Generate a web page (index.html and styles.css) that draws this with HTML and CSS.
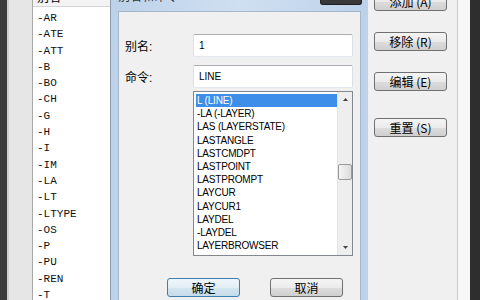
FILE: index.html
```html
<!DOCTYPE html>
<html lang="zh-CN">
<head>
    <meta charset="UTF-8">
    <meta name="viewport" content="width=device-width, initial-scale=1.0">
    <title>别名编辑器</title>
    <link rel="stylesheet" href="styles.css">
</head>
<body>
    <div class="desk">
        <div class="edge-dark"></div>
        <div class="edge-gray"></div>

        <div class="alias-pane">
            <div class="alias-head">别名</div>
            <ul class="alias-list">
                <li>-AR</li>
                <li>-ATE</li>
                <li>-ATT</li>
                <li>-B</li>
                <li>-BO</li>
                <li>-CH</li>
                <li>-G</li>
                <li>-H</li>
                <li>-I</li>
                <li>-IM</li>
                <li>-LA</li>
                <li>-LT</li>
                <li>-LTYPE</li>
                <li>-OS</li>
                <li>-P</li>
                <li>-PU</li>
                <li>-REN</li>
                <li>-T</li>
            </ul>
        </div>

        <div class="dialog">
            <div class="dlg-title">
                <span>别名和命令</span>
                <span class="dlg-close"></span>
            </div>
            <div class="dlg-body">
                <div class="field">
                    <label>别名:</label>
                    <div class="textbox">1</div>
                </div>
                <div class="field">
                    <label>命令:</label>
                    <div class="textbox">LINE</div>
                </div>
                <div class="cmd-box">
                    <ul class="cmd-list">
                        <li class="selected">L (LINE)</li>
                        <li>-LA (-LAYER)</li>
                        <li>LAS (LAYERSTATE)</li>
                        <li>LASTANGLE</li>
                        <li>LASTCMDPT</li>
                        <li>LASTPOINT</li>
                        <li>LASTPROMPT</li>
                        <li>LAYCUR</li>
                        <li>LAYCUR1</li>
                        <li>LAYDEL</li>
                        <li>-LAYDEL</li>
                        <li>LAYERBROWSER</li>
                    </ul>
                    <div class="scrollbar">
                        <svg class="arrow" width="15" height="15" viewBox="0 0 15 15"><path d="M5 9 L7.5 6 L10 9 Z" fill="#444"/></svg>
                        <div class="track">
                            <div class="thumb"></div>
                        </div>
                        <svg class="arrow" width="15" height="15" viewBox="0 0 15 15"><path d="M5 6 L7.5 9 L10 6 Z" fill="#444"/></svg>
                    </div>
                </div>
                <div class="dlg-actions">
                    <button class="btn btn-default">确定</button>
                    <button class="btn">取消</button>
                </div>
            </div>
        </div>

        <div class="side-pane">
            <button class="btn side-btn first">添加 (A)</button>
            <button class="btn side-btn">移除 (R)</button>
            <button class="btn side-btn">编辑 (E)</button>
            <button class="btn side-btn reset">重置 (S)</button>
        </div>

        <div class="edge-light"></div>
        <div class="edge-dark right"></div>
    </div>
</body>
</html>
```

FILE: styles.css
```css
* {
    margin: 0;
    padding: 0;
    box-sizing: border-box;
}

body {
    width: 480px;
    height: 300px;
    overflow: hidden;
    background: #f0f0f0;
    font-family: "Liberation Sans", "Noto Sans CJK SC", sans-serif;
    color: #000;
}

.desk {
    display: flex;
    height: 300px;
}

.edge-dark {
    width: 7px;
    background: #3b3b3b;
}

.edge-dark.right {
    width: 10px;
    background: #2e2e2e;
}

.edge-gray {
    width: 25px;
    background: #e6e6e6;
    border-left: 2px solid #cfcfcf;
}

.edge-light {
    width: 12px;
    background: #f7f7f7;
}

/* left list of aliases */
.alias-pane {
    width: 79px;
    background: #fff;
    border-left: 1px solid #a9a9a9;
    border-right: 1px solid #8f9aa8;
}

.alias-head {
    height: 17px;
    margin-top: -10px;
    padding-left: 4px;
    font-size: 12px;
    line-height: 16px;
    background: #f3f3f3;
    border-bottom: 1px solid #d5d5d5;
}

.alias-list {
    list-style: none;
    padding-top: 3px;
    padding-left: 4px;
    font-family: "Liberation Mono", monospace;
    font-size: 11px;
    line-height: 16.3px;
    color: #111;
}

/* dialog */
.dialog {
    width: 257px;
    padding: 0 7px;
    display: flex;
    flex-direction: column;
    background: linear-gradient(to right, #bcd2ea, #cfdff1 50%, #bcd2ea);
}

.dlg-title {
    height: 11px;
    display: flex;
    justify-content: space-between;
    font-size: 12px;
    line-height: 12px;
    color: #333;
}

.dlg-title span:first-child {
    margin-top: -9px;
}

.dlg-close {
    width: 42px;
    height: 5px;
    margin-right: -1px;
    background: #383838;
    border: 1px solid #1e1e1e;
    border-top: none;
    border-radius: 0 0 3px 3px;
}

.dlg-body {
    flex: 1;
    background: #f0f0f0;
    border: 1px solid #a7b6c8;
    border-bottom: none;
    padding: 22px 7px 0 6px;
}

.field {
    display: flex;
    align-items: center;
    margin-bottom: 8px;
}

.field label {
    width: 68px;
    font-size: 12px;
}

.textbox {
    width: 160px;
    height: 23px;
    background: #fff;
    border: 1px solid #dbdfe6;
    border-top-color: #abadb3;
    border-bottom-color: #e3e9ef;
    border-radius: 2px;
    padding-left: 5px;
    font-size: 10px;
    line-height: 21px;
}

.field + .field {
    margin-bottom: 3px;
}

.cmd-box {
    display: flex;
    width: 160px;
    height: 165px;
    margin-left: 68px;
    background: #fff;
    border: 1px solid #828790;
}

.cmd-list {
    flex: 1;
    list-style: none;
    padding: 2px 0 0 2px;
    font-size: 10px;
    letter-spacing: -0.2px;
    line-height: 13.2px;
}

.cmd-list li {
    padding-left: 1px;
}

.cmd-list .selected {
    background: #3d8ee9;
    color: #fff;
}

.scrollbar {
    width: 15px;
    display: flex;
    flex-direction: column;
    background: #eeeeee;
    border-left: 1px solid #e4e4e4;
}

.arrow {
    display: block;
    flex-shrink: 0;
}

.track {
    flex: 1;
    padding-top: 57px;
}

.thumb {
    width: 14px;
    height: 16px;
    background: linear-gradient(to right, #f4f4f4, #dcdcdc);
    border: 1px solid #9a9a9a;
    border-radius: 2px;
}

.dlg-actions {
    display: flex;
    gap: 30px;
    margin-top: 22px;
    padding-left: 42px;
}

/* buttons */
.btn {
    width: 73px;
    height: 19px;
    font-family: "Noto Sans CJK SC", "Liberation Sans", sans-serif;
    font-size: 12px;
    line-height: 16px;
    color: #000;
    border: 1px solid #707070;
    border-radius: 3px;
    background: linear-gradient(#f4f4f4 0%, #ebebeb 50%, #dddddd 51%, #cfcfcf 100%);
}

.btn-default {
    border-color: #3c7fb1;
    background: linear-gradient(#eef6fa 0%, #e2eef5 50%, #d3e6f1 51%, #c6dce9 100%);
}

/* right side of the editor */
.side-pane {
    width: 90px;
    padding-left: 6px;
    display: flex;
    flex-direction: column;
    background: #f0f0f0;
    border-right: 1px solid #c9c9c9;
}

.side-btn {
    margin-top: 21px;
}

.side-btn.first {
    margin-top: -8px;
}

.side-btn.reset {
    margin-top: 27px;
}
```
